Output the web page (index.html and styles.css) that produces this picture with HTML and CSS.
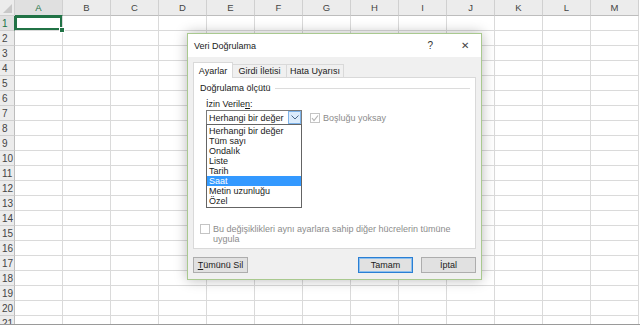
FILE: index.html
```html
<!DOCTYPE html>
<html lang="tr">
<head>
  <meta charset="UTF-8">
  <title>Veri Doğrulama</title>
  <link rel="stylesheet" href="styles.css">
</head>
<body>
  <!-- Worksheet grid, filled in by the script below -->
  <div class="sheet" id="sheet"></div>

  <!-- Data validation dialog -->
  <div class="dialog">
    <div class="titlebar">
      <span class="title">Veri Doğrulama</span>
      <span class="help">?</span>
      <span class="close">&#x2715;</span>
    </div>

    <div class="dialog-body">
      <div class="tabs">
        <div class="tab active">Ayarlar</div>
        <div class="tab">Girdi İletisi</div>
        <div class="tab">Hata Uyarısı</div>
      </div>

      <div class="panel">
        <div class="group-title">
          <span>Doğrulama ölçütü</span>
          <span class="group-line"></span>
        </div>

        <div class="field-label">İzin Verile<u>n</u>:</div>
        <div class="field-row">
          <div class="combo">
            <span class="combo-value">Herhangi bir değer</span>
            <span class="combo-btn">
              <svg width="8" height="5" viewBox="0 0 8 5"><polyline points="0.5,0.5 4,4 7.5,0.5" fill="none" stroke="#4d6a8a" stroke-width="1"/></svg>
            </span>
            <ul class="combo-list">
              <li>Herhangi bir değer</li>
              <li>Tüm sayı</li>
              <li>Ondalık</li>
              <li>Liste</li>
              <li>Tarih</li>
              <li class="selected">Saat</li>
              <li>Metin uzunluğu</li>
              <li>Özel</li>
            </ul>
          </div>
          <label class="check disabled">
            <span class="box">
              <svg width="8" height="8" viewBox="0 0 8 8"><polyline points="1,4 3,6.5 7,1.5" fill="none" stroke="#b4b4b4" stroke-width="1.2"/></svg>
            </span>
            Boşluğu yoksay
          </label>
        </div>

        <label class="check disabled apply-all">
          <span class="box"></span>
          <span>Bu değişiklikleri aynı ayarlara sahip diğer hücrelerin tümüne<br>uygula</span>
        </label>
      </div>

      <div class="buttons">
        <button class="btn"><u>T</u>ümünü Sil</button>
        <span class="spacer"></span>
        <button class="btn default">Tamam</button>
        <button class="btn">İptal</button>
      </div>
    </div>
  </div>

  <script>
    const cols = "ABCDEFGHIJKLM".split("");
    const sheet = document.getElementById("sheet");

    function addCell(cls, text) {
      const div = document.createElement("div");
      div.className = cls;
      if (text) div.textContent = text;
      sheet.appendChild(div);
      return div;
    }

    // Header row
    addCell("corner");
    cols.forEach((c, i) => addCell(i === 0 ? "col-head on" : "col-head", c));

    // Rows
    for (let r = 1; r <= 21; r++) {
      addCell(r === 1 ? "row-head on" : "row-head", r);
      cols.forEach((c, i) => addCell(r === 1 && i === 0 ? "cell active" : "cell"));
    }
  </script>
</body>
</html>
```

FILE: styles.css
```css
body {
  margin: 0;
  width: 640px;
  height: 326px;
  overflow: hidden;
  background: #ffffff;
  font-family: "Liberation Sans", Arial, sans-serif;
}

/* Worksheet */
.sheet {
  display: grid;
  grid-template-columns: 15px repeat(13, 48px);
  grid-template-rows: 16px;
  grid-auto-rows: 15px;
  height: 324px;
  overflow: hidden;
  border-bottom: 1px solid #9a9a9a;
}
.corner, .col-head, .row-head, .cell {
  box-sizing: border-box;
  border-right: 1px solid #dadada;
  border-bottom: 1px solid #dadada;
}
.corner, .col-head, .row-head {
  background: #ececec;
  color: #444444;
  font-size: 9.5px;
  display: flex;
  align-items: center;
  justify-content: center;
  border-color: #d0d0d0;
}
.col-head {
  border-bottom-color: #bdbdbd;
}
.row-head {
  justify-content: flex-start;
  padding-left: 2px;
  font-size: 10px;
  border-right-color: #bdbdbd;
}
.col-head.on, .row-head.on {
  background: #e0e0e0;
  color: #217346;
}
.col-head.on {
  border-bottom: 1px solid #217346;
}
.row-head.on {
  border-right: 1px solid #217346;
}
.corner {
  position: relative;
}
.corner::after {
  content: "";
  position: absolute;
  right: 2px;
  bottom: 2px;
  border-left: 9px solid transparent;
  border-bottom: 9px solid #c8c8c8;
}
.cell.active {
  position: relative;
  box-shadow: inset 0 0 0 2px #217346;
}
.cell.active::after {
  content: "";
  position: absolute;
  right: -3px;
  bottom: -3px;
  width: 4px;
  height: 4px;
  background: #217346;
  border: 1px solid #ffffff;
  z-index: 1;
}

/* Dialog */
.dialog {
  position: absolute;
  left: 187px;
  top: 33px;
  width: 295px;
  height: 247px;
  box-sizing: border-box;
  border: 1px solid #a9c98f;
  background: #f0f0f0;
  box-shadow: 0 0 12px rgba(0, 0, 0, 0.28);
  display: flex;
  flex-direction: column;
  font-size: 9px;
  color: #1a1a1a;
  z-index: 2;
}
.titlebar {
  height: 24px;
  background: #ffffff;
  display: flex;
  align-items: center;
  padding-left: 6px;
}
.title {
  flex: 1;
  font-size: 9px;
}
.help {
  font-size: 10px;
  color: #333333;
  margin-right: 28px;
}
.close {
  font-size: 10px;
  color: #444444;
  margin-right: 12px;
}
.dialog-body {
  flex: 1;
  padding: 5px 5px 6px 5px;
  display: flex;
  flex-direction: column;
}
.tabs {
  display: flex;
  align-items: flex-end;
  height: 15px;
}
.tab {
  box-sizing: border-box;
  height: 13px;
  padding: 0;
  border: 1px solid #d9d9d9;
  border-bottom: none;
  border-left: none;
  display: flex;
  align-items: center;
  justify-content: center;
  white-space: nowrap;
  background: #f0f0f0;
}
.tab.active {
  height: 16px;
  width: 40px;
  border-left: 1px solid #d9d9d9;
  background: #ffffff;
  margin-bottom: -1px;
  position: relative;
  z-index: 1;
}
.tab:nth-child(2) {
  width: 54px;
}
.tab:nth-child(3) {
  width: 57px;
}
.panel {
  box-sizing: border-box;
  height: 172px;
  width: 283px;
  background: #ffffff;
  border: 1px solid #d9d9d9;
  padding: 5px 5px 4px 5px;
  display: flex;
  flex-direction: column;
}
.group-title {
  display: flex;
  align-items: center;
  height: 10px;
  margin-left: 1px;
}
.group-line {
  flex: 1;
  height: 1px;
  background: #dcdcdc;
  margin-left: 4px;
}
.field-label {
  margin: 6px 0 0 7px;
  height: 10px;
  line-height: 10px;
}
.field-row {
  display: flex;
  align-items: center;
  margin: 1px 0 0 7px;
}
.combo {
  position: relative;
  box-sizing: border-box;
  width: 96px;
  height: 15px;
  border: 1px solid #7a7a7a;
  display: flex;
  align-items: center;
}
.combo-value {
  flex: 1;
  padding-left: 2px;
}
.combo-btn {
  box-sizing: border-box;
  width: 13px;
  height: 13px;
  background: #dcecfc;
  border: 1px solid #7eb4ea;
  display: flex;
  align-items: center;
  justify-content: center;
}
.combo-list {
  position: absolute;
  left: -1px;
  top: 13px;
  box-sizing: border-box;
  width: 96px;
  margin: 0;
  padding: 1px 0 1px 0;
  list-style: none;
  background: #ffffff;
  border: 1px solid #646464;
}
.combo-list li {
  height: 10px;
  line-height: 10px;
  padding-left: 2px;
}
.combo-list li.selected {
  background: #3399ff;
  color: #ffffff;
}
.check {
  display: flex;
  align-items: flex-start;
}
.check.disabled {
  color: #8c8c8c;
}
.box {
  box-sizing: border-box;
  width: 10px;
  height: 10px;
  border: 1px solid #c4c4c4;
  background: #ffffff;
  display: flex;
  align-items: center;
  justify-content: center;
  margin-right: 3px;
  flex: none;
}
.field-row .check {
  margin-left: 8px;
  align-items: center;
}
.apply-all {
  margin-top: auto;
  margin-left: 1px;
  line-height: 10px;
}
.buttons {
  display: flex;
  margin-top: 8px;
  gap: 8px;
}
.spacer {
  flex: 1;
}
.btn {
  box-sizing: border-box;
  width: 55px;
  height: 16px;
  padding: 0;
  font-family: "Liberation Sans", Arial, sans-serif;
  font-size: 9px;
  color: #1a1a1a;
  background: #e1e1e1;
  border: 1px solid #adadad;
}
.btn.default {
  border-color: #2a7fd4;
  box-shadow: inset 0 0 0 1px #8ec0ee;
}
```
